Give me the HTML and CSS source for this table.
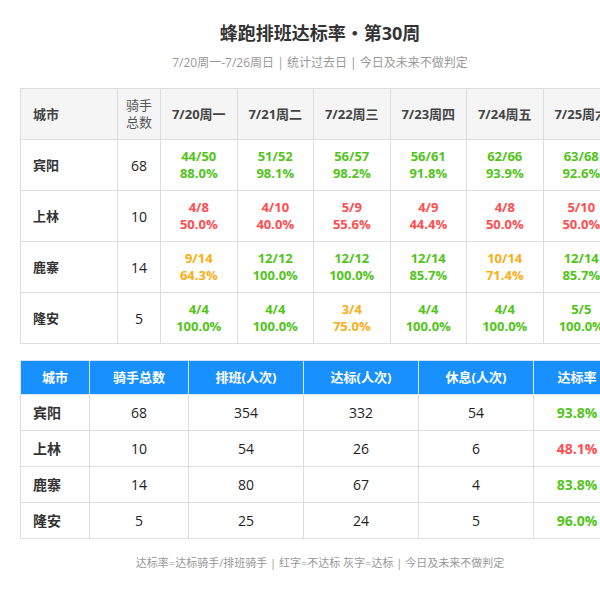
FILE: index.html
```html
<!DOCTYPE html>
<html lang="zh-CN">
<head>
<meta charset="utf-8">
<title>蜂跑排班达标率</title>
<link rel="stylesheet" href="styles.css">
</head>
<body>
<div class="page">
  <h1 class="title">蜂跑排班达标率・第30周</h1>
  <p class="subtitle">7/20周一-7/26周日 | 统计过去日 | 今日及未来不做判定</p>

  <table class="grid daily">
    <colgroup>
      <col class="c-city"><col class="c-riders">
      <col class="c-day"><col class="c-day"><col class="c-day"><col class="c-day"><col class="c-day"><col class="c-day"><col class="c-day">
    </colgroup>
    <thead>
      <tr>
        <th class="city">城市</th>
        <th>骑手总数</th>
        <th>7/20周一</th>
        <th>7/21周二</th>
        <th>7/22周三</th>
        <th>7/23周四</th>
        <th>7/24周五</th>
        <th>7/25周六</th>
        <th>7/26周日</th>
      </tr>
    </thead>
    <tbody>
      <tr>
        <td class="city">宾阳</td><td class="num">68</td>
        <td class="ok">44/50<br>88.0%</td>
        <td class="ok">51/52<br>98.1%</td>
        <td class="ok">56/57<br>98.2%</td>
        <td class="ok">56/61<br>91.8%</td>
        <td class="ok">62/66<br>93.9%</td>
        <td class="ok">63/68<br>92.6%</td>
        <td class="na">-</td>
      </tr>
      <tr>
        <td class="city">上林</td><td class="num">10</td>
        <td class="bad">4/8<br>50.0%</td>
        <td class="bad">4/10<br>40.0%</td>
        <td class="bad">5/9<br>55.6%</td>
        <td class="bad">4/9<br>44.4%</td>
        <td class="bad">4/8<br>50.0%</td>
        <td class="bad">5/10<br>50.0%</td>
        <td class="na">-</td>
      </tr>
      <tr>
        <td class="city">鹿寨</td><td class="num">14</td>
        <td class="warn">9/14<br>64.3%</td>
        <td class="ok">12/12<br>100.0%</td>
        <td class="ok">12/12<br>100.0%</td>
        <td class="ok">12/14<br>85.7%</td>
        <td class="warn">10/14<br>71.4%</td>
        <td class="ok">12/14<br>85.7%</td>
        <td class="na">-</td>
      </tr>
      <tr>
        <td class="city">隆安</td><td class="num">5</td>
        <td class="ok">4/4<br>100.0%</td>
        <td class="ok">4/4<br>100.0%</td>
        <td class="warn">3/4<br>75.0%</td>
        <td class="ok">4/4<br>100.0%</td>
        <td class="ok">4/4<br>100.0%</td>
        <td class="ok">5/5<br>100.0%</td>
        <td class="na">-</td>
      </tr>
    </tbody>
  </table>

  <table class="grid summary">
    <colgroup>
      <col class="s-city"><col class="s-riders"><col class="s-mid"><col class="s-mid"><col class="s-mid"><col class="s-rate">
    </colgroup>
    <thead>
      <tr>
        <th>城市</th>
        <th>骑手总数</th>
        <th>排班(人次)</th>
        <th>达标(人次)</th>
        <th>休息(人次)</th>
        <th>达标率</th>
      </tr>
    </thead>
    <tbody>
      <tr><td class="city">宾阳</td><td>68</td><td>354</td><td>332</td><td>54</td><td class="ok">93.8%</td></tr>
      <tr><td class="city">上林</td><td>10</td><td>54</td><td>26</td><td>6</td><td class="bad">48.1%</td></tr>
      <tr><td class="city">鹿寨</td><td>14</td><td>80</td><td>67</td><td>4</td><td class="ok">83.8%</td></tr>
      <tr><td class="city">隆安</td><td>5</td><td>25</td><td>24</td><td>5</td><td class="ok">96.0%</td></tr>
    </tbody>
  </table>

  <p class="note">达标率=达标骑手/排班骑手 | 红字=不达标 灰字=达标 | 今日及未来不做判定</p>
</div>
</body>
</html>
```

FILE: styles.css
```css
html, body {
  margin: 0;
  padding: 0;
  background: #ffffff;
}

body {
  padding: 20px;
  font-family: "Open Sans", "Noto Sans CJK SC", sans-serif;
  color: #222222;
}

.page {
  width: 600px;
}

.title {
  margin: 0;
  font-size: 18px;
  line-height: 26px;
  font-weight: 700;
  color: #333333;
  text-align: center;
}

.subtitle {
  margin: 8px 0 16px;
  font-size: 12px;
  line-height: 18px;
  color: #999999;
  text-align: center;
}

.grid {
  border-collapse: collapse;
  table-layout: fixed;
}

.grid th,
.grid td {
  border: 1px solid #dddddd;
  padding: 8px;
  text-align: center;
  vertical-align: middle;
}

/* daily table */
.daily {
  width: 676px;
  font-size: 13px;
  line-height: 17px;
}

.c-city { width: 97px; }
.c-riders { width: 43px; }
.c-day { width: 76.5px; }

.daily th {
  background: #f5f5f5;
  color: #444444;
  font-weight: 700;
  white-space: nowrap;
}

.daily th:nth-child(2) {
  white-space: normal;
  font-weight: 400;
  color: #555555;
}

.daily th.city,
.daily td.city {
  text-align: left;
  padding-left: 12px;
}

.daily td.city {
  font-weight: 700;
  color: #333333;
}

.daily td.num {
  color: #222222;
  font-size: 14px;
}

.daily td.ok,
.daily td.bad,
.daily td.warn,
.daily td.na {
  font-weight: 700;
  white-space: nowrap;
}

/* summary table */
.summary {
  width: 600px;
  margin-top: 16px;
  font-size: 14px;
  line-height: 19px;
}

.s-city { width: 69px; }
.s-riders { width: 99px; }
.s-mid { width: 115px; }
.s-rate { width: 87px; }

.summary th {
  background: #1890ff;
  color: #ffffff;
  font-size: 13px;
  line-height: 17px;
  font-weight: 700;
  border-color: #d6e6f7;
}

.summary td.city {
  text-align: left;
  padding-left: 12px;
  font-weight: 700;
  color: #333333;
}

.summary td.ok,
.summary td.bad {
  font-weight: 700;
}

.ok { color: #52c41a; }
.bad { color: #ff4d4f; }
.warn { color: #faad14; }
.na { color: #bbbbbb; }

.note {
  margin: 16px 0 0;
  font-size: 11px;
  line-height: 16px;
  color: #999999;
  text-align: center;
}
```
